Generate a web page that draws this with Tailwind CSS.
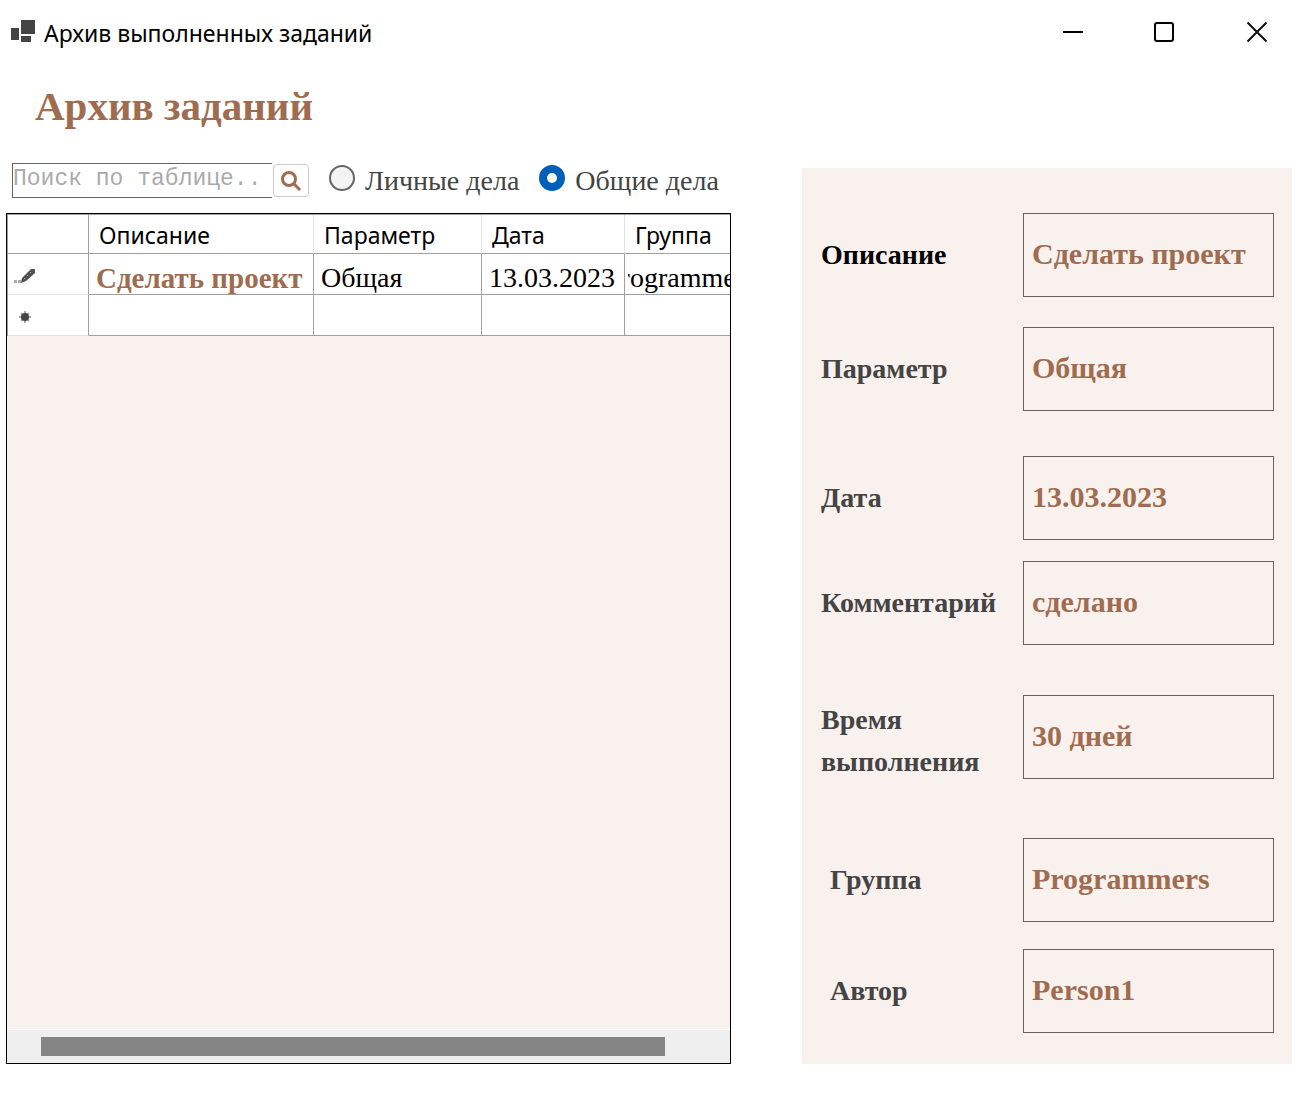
<!DOCTYPE html>
<html lang="ru">
<head>
<meta charset="utf-8">
<meta name="viewport" content="width=device-width, initial-scale=1">
<title>Архив выполненных заданий</title>
<script src="https://cdn.jsdelivr.net/npm/@tailwindcss/browser@4"></script>
</head>
<body class="flex min-h-screen flex-col bg-white font-['Liberation_Serif',serif] text-black">
<header class="flex h-16 items-center justify-between pl-[10px] pr-[47px] font-['Noto_Sans',sans-serif]">
  <div class="flex items-center gap-2">
    <svg class="size-[26px]" viewBox="0 0 26 26" fill="#444" aria-hidden="true"><path d="M11 1h14v14H11zM1 9h8v12H1zM11 17h10v6H11z"/></svg>
    <span class="pt-[2px] text-[23px] leading-8">Архив выполненных заданий</span>
  </div>
  <div class="flex gap-[68px]">
    <button type="button" aria-label="Свернуть" class="size-6"><svg viewBox="0 0 24 24" fill="none" stroke="#000" stroke-width="2"><path d="M2 12h20"/></svg></button>
    <button type="button" aria-label="Развернуть" class="size-6"><svg viewBox="0 0 24 24" fill="none" stroke="#000" stroke-width="2"><rect x="2" y="3" width="18" height="18" rx="2"/></svg></button>
    <button type="button" aria-label="Закрыть" class="size-6"><svg viewBox="0 0 24 24" fill="none" stroke="#111" stroke-width="2"><path d="M2.500 2.500l19 19M21.500 2.500l-19 19"/></svg></button>
  </div>
</header>
<main class="flex flex-1 gap-[71px] pb-[31px] pl-[6px] pr-6">
  <section class="flex min-w-0 flex-1 flex-col">
    <h1 class="pl-[29px] pt-[18px] text-[41px] font-bold leading-[48px] text-[#a06c50]">Архив заданий</h1>
    <form class="mt-[33px] flex h-[35px] items-center pl-[6px] text-[28px] text-[#444]">
      <input type="text" aria-label="Поиск по таблице" placeholder="Поиск по таблице.." class="h-[35px] w-[260px] border border-r-0 border-[#646464] pb-1 font-['Liberation_Mono',monospace] text-[23px] outline-none placeholder:text-[#aaa]">
      <button type="button" aria-label="Найти" class="ml-px flex h-[33px] w-9 items-center justify-center rounded border border-[#ccc] pt-[2px]"><svg class="size-[22px]" viewBox="0 0 22 22" fill="none" stroke="#a06c50"><circle cx="9" cy="8" r="6.500" stroke-width="3"/><path d="M13 12l7 7" stroke-width="3"/></svg></button>
      <label class="ml-5 flex items-center gap-[10px] whitespace-nowrap"><input type="radio" name="scope" class="mb-[6px] size-[26px] appearance-none rounded-full border-2 border-[#666] bg-[#f3f3f3] checked:border-8 checked:border-[#005fb8] checked:bg-white"><span>Личные дела</span></label>
      <label class="ml-5 flex items-center gap-[10px] whitespace-nowrap"><input type="radio" name="scope" checked class="mb-[6px] size-[26px] appearance-none rounded-full border-2 border-[#666] bg-[#f3f3f3] checked:border-8 checked:border-[#005fb8] checked:bg-white"><span>Общие дела</span></label>
    </form>
    <div class="mt-[15px] flex flex-1 flex-col overflow-hidden border border-black bg-[#f9f1ee]">
      <table class="w-full table-fixed border-separate border-spacing-0 border-l border-t border-[#a0a0a0] bg-white text-left">
        <colgroup><col class="w-[81px]"><col class="w-[225px]"><col class="w-[168px]"><col class="w-[143px]"><col></colgroup>
        <thead class="font-['Noto_Sans',sans-serif] text-[23px]">
          <tr class="h-[39px]">
            <td class="border-b border-r border-[#a0a0a0]"></td>
            <th scope="col" class="border-b border-r border-b-[#a0a0a0] border-r-[#e3e3e3] pl-[10px] pt-[2px] font-normal leading-8">Описание</th>
            <th scope="col" class="border-b border-r border-b-[#a0a0a0] border-r-[#e3e3e3] pl-[10px] pt-[2px] font-normal leading-8">Параметр</th>
            <th scope="col" class="border-b border-r border-b-[#a0a0a0] border-r-[#e3e3e3] pl-[10px] pt-[2px] font-normal leading-8">Дата</th>
            <th scope="col" class="border-b border-b-[#a0a0a0] pl-[10px] pt-[2px] font-normal leading-8">Группа</th>
          </tr>
        </thead>
        <tbody class="text-[28px]">
          <tr class="h-[41px]">
            <td class="border-b border-r border-b-[#e3e3e3] border-r-[#a0a0a0] pl-[5px] pt-1"><svg class="h-4 w-6" viewBox="0 0 24 16" aria-hidden="true"><path d="M8 15l1-5L18 1l4 0v4l-9 8z" fill="#505050"/><path d="M11 10l1 1M14 7l1 1M17 4l1 1" stroke="#bbb"/><path d="M1 12h3v3H1zM5 12h3v3H5z" fill="#aaa"/></svg></td>
            <td class="whitespace-nowrap border-b border-r border-[#a0a0a0] pl-[7px] pt-2 text-[29px] font-bold leading-8 text-[#a06c50]">Сделать проект</td>
            <td class="border-b border-r border-[#a0a0a0] pl-[7px] pt-2 leading-8">Общая</td>
            <td class="border-b border-r border-[#a0a0a0] pl-[7px] pt-2 leading-8">13.03.2023</td>
            <td class="border-b border-[#a0a0a0] pl-[3px] pt-2"><div class="h-8 overflow-hidden leading-8"><span class="-ml-[23px]">Programmers</span></div></td>
          </tr>
          <tr class="h-[41px]">
            <td class="border-b border-r border-b-[#e3e3e3] border-r-[#a0a0a0] pl-[10px] pt-1"><svg class="size-[14px]" viewBox="0 0 14 14" aria-hidden="true"><path d="M7 1v12M1 7h12M3 3l8 8M11 3l-8 8" stroke="#aaa" stroke-width="2"/><circle cx="7" cy="7" r="4" fill="#444"/></svg></td>
            <td class="border-b border-r border-[#a0a0a0]"></td>
            <td class="border-b border-r border-[#a0a0a0]"></td>
            <td class="border-b border-r border-[#a0a0a0]"></td>
            <td class="border-b border-[#a0a0a0]"></td>
          </tr>
        </tbody>
      </table>
      <div class="mt-auto h-[34px] border-t border-white bg-[#efefef] pl-[34px] pr-[65px] pt-[7px]"><div class="h-[19px] bg-[#858585]"></div></div>
    </div>
  </section>
  <aside class="mt-[104px] flex w-[490px] shrink-0 flex-col bg-[#f9f1ee] pb-[31px] pl-[19px] pr-[18px] pt-[45px] text-[28px] font-bold text-[#444]">
    <div class="flex items-center justify-between"><label for="f1" class="text-black">Описание</label><input id="f1" value="Сделать проект" class="h-[84px] w-[251px] border border-[#646464] px-2 pb-[2px] text-[30px] text-[#a06c50]"></div>
    <div class="mt-[30px] flex items-center justify-between"><label for="f2">Параметр</label><input id="f2" value="Общая" class="h-[84px] w-[251px] border border-[#646464] px-2 pb-[2px] text-[30px] text-[#a06c50]"></div>
    <div class="mt-[45px] flex items-center justify-between"><label for="f3">Дата</label><input id="f3" value="13.03.2023" class="h-[84px] w-[251px] border border-[#646464] px-2 pb-[2px] text-[30px] text-[#a06c50]"></div>
    <div class="mt-[21px] flex items-center justify-between"><label for="f4">Комментарий</label><input id="f4" value="сделано" class="h-[84px] w-[251px] border border-[#646464] px-2 pb-[2px] text-[30px] text-[#a06c50]"></div>
    <div class="mt-[50px] flex h-[84px] items-center justify-between"><label for="f5" class="pt-2 leading-[42px]">Время<br>выполнения</label><input id="f5" value="30 дней" class="h-[84px] w-[251px] border border-[#646464] px-2 pb-[2px] text-[30px] text-[#a06c50]"></div>
    <div class="mt-[59px] flex items-center justify-between pl-[9px]"><label for="f6">Группа</label><input id="f6" value="Programmers" class="h-[84px] w-[251px] border border-[#646464] px-2 pb-[2px] text-[30px] text-[#a06c50]"></div>
    <div class="mt-[27px] flex items-center justify-between pl-[9px]"><label for="f7">Автор</label><input id="f7" value="Person1" class="h-[84px] w-[251px] border border-[#646464] px-2 pb-[2px] text-[30px] text-[#a06c50]"></div>
  </aside>
</main>
</body>
</html>
